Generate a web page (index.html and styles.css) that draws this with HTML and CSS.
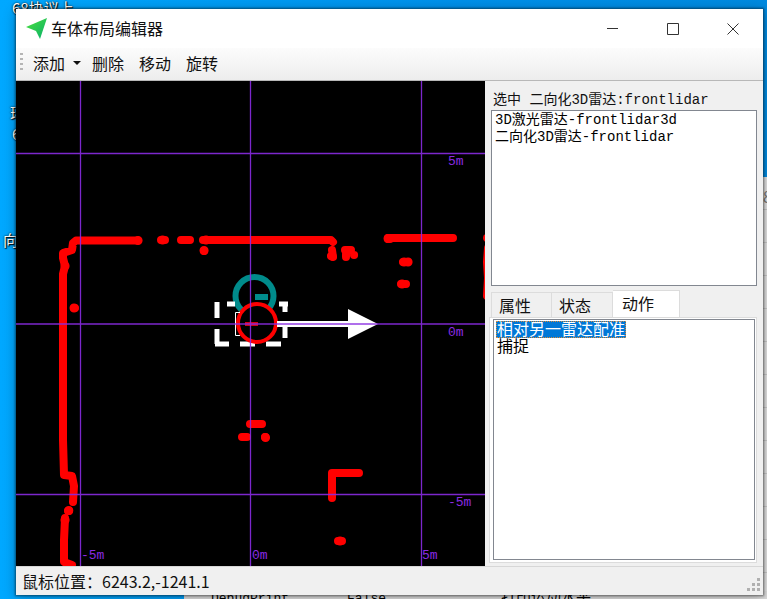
FILE: index.html
```html
<!DOCTYPE html>
<html lang="zh-CN">
<head>
<meta charset="utf-8">
<meta name="viewport" content="width=device-width, initial-scale=1">
<title>车体布局编辑器</title>
<link rel="stylesheet" href="styles.css">
</head>
<body>
<div class="desktop">
  <span class="shortcut shortcut-a">68协议上</span>
  <span class="shortcut shortcut-b">环</span>
  <span class="shortcut shortcut-c">68</span>
  <span class="shortcut shortcut-d">向导</span>
  <div class="back-window">
    <span class="back-tag">8</span>
    <div class="back-row">
      <span class="cell-name">DebugPrint</span>
      <span class="cell-value">False</span>
      <span class="cell-note">打印运动水平</span>
    </div>
  </div>

  <main class="window">
    <header class="titlebar">
      <svg class="logo" viewBox="0 0 22 22" aria-hidden="true">
        <defs>
          <linearGradient id="leaf" x1="0" y1="0" x2="1" y2="1">
            <stop offset="0" stop-color="#4be03a"/>
            <stop offset="1" stop-color="#08b06c"/>
          </linearGradient>
        </defs>
        <path d="M21 0 0 9 10 13 14 21Z" fill="url(#leaf)"/>
      </svg>
      <h1>车体布局编辑器</h1>
      <div class="window-buttons">
        <button type="button" aria-label="最小化"><svg viewBox="0 0 12 12"><path d="M0 5.500H11"/></svg></button>
        <button type="button" aria-label="最大化"><svg viewBox="0 0 12 12"><path d="M.5 .5H11.500V11.500H.5Z"/></svg></button>
        <button type="button" aria-label="关闭"><svg viewBox="0 0 12 12"><path d="M.5 .5 11.500 11.500M11.500 .5 .5 11.500"/></svg></button>
      </div>
    </header>

    <nav class="toolbar" aria-label="工具">
      <span class="grip"></span>
      <button type="button" class="has-menu">添加<span class="caret"></span></button>
      <button type="button">删除</button>
      <button type="button">移动</button>
      <button type="button">旋转</button>
    </nav>

    <div class="workspace">
      <div class="canvas">
        <svg class="scene" viewBox="16 81 469 485" preserveAspectRatio="xMinYMin slice" role="img" aria-label="车体布局">
          <g class="scan">
            <path d="M137 240.500H76L73 243 72 250 63 253 63 258 65 266 63 274 63 300 63 330 63 360 63 400 63 440 64 475 72 476 74 486 73 502"/>
            <path d="M65 518 64 540 64 562 72 565"/>
            <path d="M68 511h1M74 308h1"/>
            <path d="M161 240h4M181 240h9M203 240H331L333 242M204 251h.1"/>
            <path d="M332 250 333 257M331 256h1M345 250h6M346 250v7M354 255h.1"/>
            <path d="M388 238H453M388 239h2M403 262h5M401 284h5"/>
            <path d="M487 238h.1M488 248 487 262 488 278 487 296"/>
            <path d="M250 424h12M242 437h5M265 437h.1M332 498V473H359M338 541h4"/>
          </g>
          <path class="knots" d="M138 240.500h.1M162.500 240h.1M404 262h.1M408 262h.1M402 284h.1M204 250.500h.1M68.700 510.500h.1M332 256h.1M340 541h.1M265.500 437.500h.1M74 308h.1M388 238.500h.1M206 240h.1M65 266h.1M65 520h.1"/>
          <circle class="lidar3d" cx="254.500" cy="296" r="19"/>
          <path class="lidar3d-mark" d="M255 294h13v6h-13z"/>
          <path class="frame" d="M217 302v16M217 329v15M215 344h14M227 304h8M240 344h15M266 344h15M279 304h9M285 304v8M285 325v13"/>
          <circle class="lidar" cx="257" cy="323" r="19"/>
          <path class="bracket" d="M240 312.500H235.500V335.500H240"/>
          <path class="lidar-mark" d="M245 324H258"/>
          <path class="arrow" d="M277 321h71v-12l30 15-30 15v-12h-71z"/>
          <path class="axes" d="M80.500 81V566M250.500 81V566M421.500 81V566M16 153.500H485M16 324H485M16 494.500H485"/>
          <g class="scale">
            <text x="448" y="165">5m</text>
            <text x="448" y="336">0m</text>
            <text x="448" y="506">-5m</text>
            <text x="81" y="559">-5m</text>
            <text x="252" y="559">0m</text>
            <text x="422" y="559">5m</text>
          </g>
        </svg>
      </div>

      <aside class="side">
        <label class="selected-label" for="devices">选中 二向化3D雷达:frontlidar</label>
        <select id="devices" class="listbox devices" size="8">
          <option>3D激光雷达-frontlidar3d</option>
          <option>二向化3D雷达-frontlidar</option>
        </select>
        <div class="tabs" role="tablist">
          <button type="button" role="tab" aria-selected="false">属性</button>
          <button type="button" role="tab" aria-selected="false">状态</button>
          <button type="button" role="tab" aria-selected="true">动作</button>
        </div>
        <div class="tab-page" role="tabpanel">
          <select class="listbox actions" size="8" aria-label="动作">
            <option selected>相对另一雷达配准</option>
            <option>捕捉</option>
          </select>
        </div>
      </aside>
    </div>

    <footer class="statusbar">
      <span>鼠标位置：6243.2,-1241.1</span>
      <svg class="sizegrip" viewBox="0 0 14 14" aria-hidden="true">
        <path d="M10 0h3v3h-3zM5 5h3v3H5zM10 5h3v3h-3zM0 10h3v3H0zM5 10h3v3H5zM10 10h3v3h-3z"/>
      </svg>
    </footer>
  </main>
</div>
</body>
</html>
```
FILE: styles.css
```css
* { box-sizing: border-box; }

body {
  margin: 0;
  color: #111;
  font: 16px/20px "Noto Sans CJK SC", "Noto Sans", sans-serif;
}

button {
  margin: 0;
  padding: 0;
  border: 0;
  background: none;
  color: inherit;
  font: inherit;
}

.desktop {
  position: relative;
  display: flex;
  height: 100vh;
  padding: 9px 4px 4px 16px;
  overflow: hidden;
  background: linear-gradient(90deg, #00a8ff, #0090ea 60%, #008ae0);
}

.shortcut {
  position: absolute;
  color: #fff;
  font-size: 15px;
  line-height: 16px;
  white-space: nowrap;
  text-shadow: 1px 1px 1px #000, 0 0 2px #000;
}
.shortcut-a { left: 12px; top: 0; }
.shortcut-b { left: 10px; top: 105px; }
.shortcut-c { left: 12px; top: 126px; }
.shortcut-d { left: 3px; top: 232px; }

.back-window {
  position: absolute;
  inset: 177px 0 0 184px;
  background: repeating-linear-gradient(#e2e2e2 0 32px, #c8c8c8 32px 33px);
}
.back-tag {
  position: absolute;
  right: -5px;
  top: 9px;
  color: #777;
}
.back-row {
  position: absolute;
  inset: auto 0 -8px 0;
  display: grid;
  grid-template-columns: 136px 154px 1fr;
  padding-left: 27px;
  background: #dcdcdc;
  color: #000;
  font: 13px/16px "Liberation Mono", "Noto Sans CJK SC", monospace;
}
.cell-note { font-size: 15px; }

.window {
  position: relative;
  display: flex;
  flex: 1;
  flex-direction: column;
  min-width: 0;
  background: #f0f0f0;
  box-shadow: 0 0 2px 1px rgba(0, 0, 0, .45), 0 2px 12px rgba(0, 0, 0, .3);
}

.titlebar {
  display: flex;
  align-items: center;
  height: 39px;
  padding-left: 10px;
  background: #fff;
}
.logo { width: 22px; height: 22px; }
h1 {
  margin: 0 0 2px 3px;
  font-size: 16px;
  font-weight: 400;
}
.window-buttons { display: flex; margin-left: auto; }
.window-buttons button {
  display: grid;
  place-items: center;
  width: 60px;
  height: 38px;
}
.window-buttons svg {
  width: 12px;
  height: 12px;
  overflow: visible;
  fill: none;
  stroke: #333;
}

.toolbar {
  display: flex;
  align-items: center;
  gap: 15px;
  height: 33px;
  padding: 0 0 2px 4px;
  border-bottom: 1px solid #b8b8b8;
  background: linear-gradient(#fcfcfc, #ededed);
}
.grip {
  width: 3px;
  height: 20px;
  margin-right: -5px;
  background: repeating-linear-gradient(#b5b5b5 0 2px, transparent 2px 5px);
}
.has-menu { display: flex; align-items: center; gap: 8px; }
.caret {
  margin-right: -4px;
  border: 4px solid transparent;
  border-top-color: #111;
  border-bottom: 0;
}

.workspace {
  display: grid;
  flex: 1;
  grid-template-columns: minmax(0, 1fr) 278px;
  min-height: 0;
}
.canvas {
  min-height: 0;
  overflow: hidden;
  background: #000;
}
.scene { display: block; width: 100%; height: 100%; }

.scan { fill: none; stroke: #f00; stroke-width: 8; stroke-linecap: round; stroke-linejoin: round; }
.knots { fill: none; stroke: #f00; stroke-width: 9; stroke-linecap: round; }
.lidar3d { fill: none; stroke: #008b8b; stroke-width: 6; }
.lidar3d-mark { fill: #008b8b; }
.frame { fill: none; stroke: #fff; stroke-width: 5; }
.lidar { fill: #000; stroke: #f00; stroke-width: 4; }
.bracket { fill: none; stroke: #fff; }
.lidar-mark { fill: none; stroke: #d00018; stroke-width: 4; }
.arrow { fill: #fff; }
.axes { fill: none; stroke: #8a2be2; stroke-width: 1.300; opacity: .9; }
.scale { fill: #8a2be2; font: 13px "Liberation Mono", monospace; }

.side {
  display: flex;
  flex-direction: column;
  min-height: 0;
  padding: 10px 6px 3px 4px;
}
.selected-label {
  padding-left: 4px;
  font: 14px/19px "Liberation Mono", "Noto Sans CJK SC", monospace;
  white-space: nowrap;
}
.listbox {
  display: block;
  width: 100%;
  margin: 0;
  padding: 0 2px;
  border: 1px solid #828790;
  border-radius: 0;
  outline: 0;
  background: #fff;
  color: #000;
  overflow: hidden;
}
.listbox option {
  display: flex;
  align-items: center;
  height: 17px;
  min-height: 0;
  padding: 0 1px 3px;
}
.devices {
  height: 176px;
  margin-left: 2px;
  width: calc(100% - 2px);
  font: 14px/17px "Liberation Mono", "Noto Sans CJK SC", monospace;
}
.actions {
  height: 100%;
  padding-top: 1px;
  font: 16px/17px "Noto Sans CJK SC", sans-serif;
}
.actions option:checked {
  width: 130px;
  outline: 1px dotted #d98a3a;
  outline-offset: -1px;
  background: linear-gradient(#0078d7, #0078d7);
  color: #fff;
}

.tabs {
  display: flex;
  align-items: flex-end;
  height: 31px;
  padding-left: 2px;
}
.tabs button {
  width: 61px;
  height: 25px;
  padding: 0 0 0 7px;
  border: 1px solid #dcdcdc;
  border-bottom: 0;
  background: #f0f0f0;
  text-align: left;
}
.tabs button + button { border-left: 0; }
.tabs button[aria-selected="true"] {
  width: 67px;
  height: 27px;
  padding: 0 0 3px 9px;
  background: #fff;
}
.tab-page {
  flex: 1;
  min-height: 0;
  padding: 1px 1px 2px 3px;
  border: 1px solid #dcdcdc;
  background: #fff;
}

.statusbar {
  display: flex;
  align-items: center;
  justify-content: space-between;
  height: 29px;
  padding: 0 2px 0 6px;
  border-top: 1px solid #d7d7d7;
}
.sizegrip {
  align-self: flex-end;
  width: 14px;
  height: 14px;
  margin-bottom: 3px;
  fill: #b0b0b0;
}
```
